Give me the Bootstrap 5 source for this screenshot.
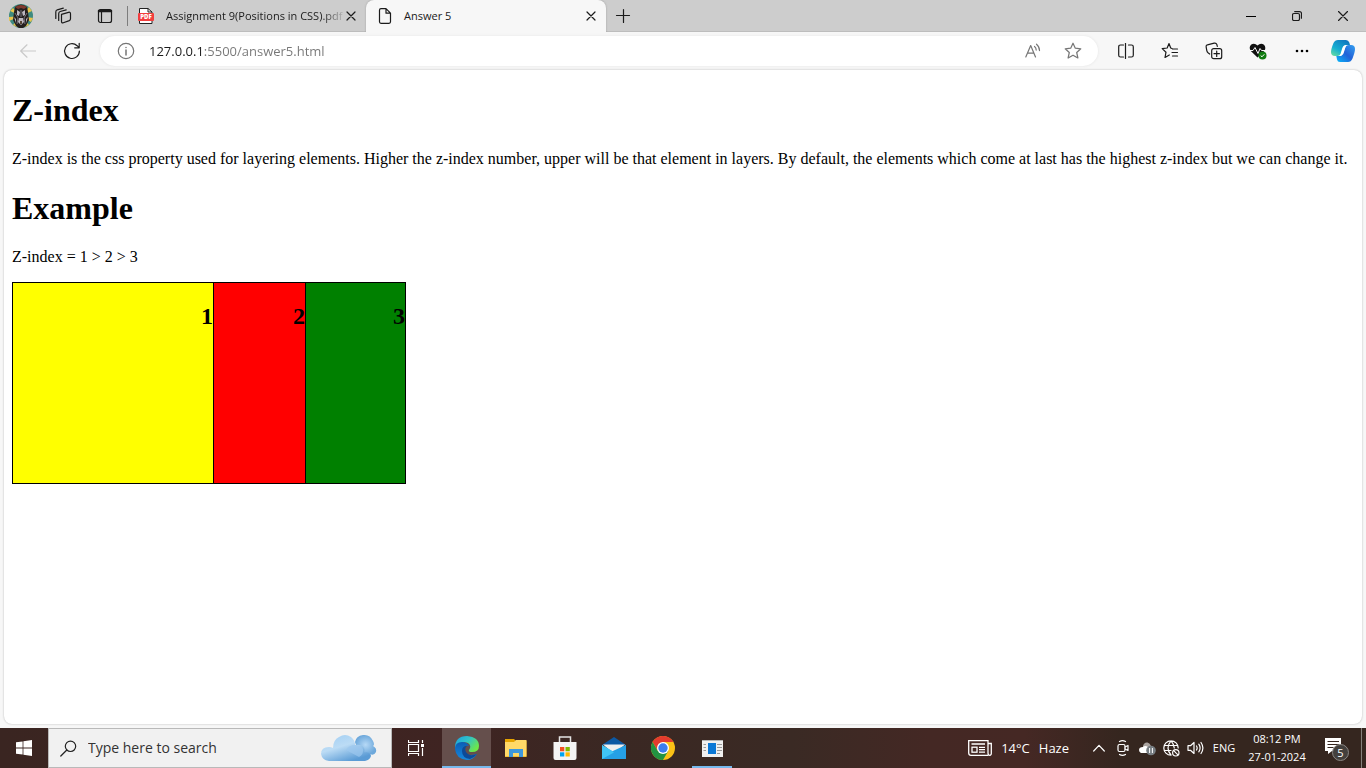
<!DOCTYPE html>
<html lang="en">
<head>
<meta charset="utf-8">
<meta name="viewport" content="width=device-width, initial-scale=1">
<title>Answer 5</title>
<link href="https://cdn.jsdelivr.net/npm/bootstrap@5.3.0/dist/css/bootstrap.min.css" rel="stylesheet">
<style>
  body { font-family: "Open Sans", "Noto Sans", sans-serif; font-size: 11px; line-height: 16px; background: #f7f7f7; color: #1b1b1b; }
  button { border: 0; padding: 0; background: transparent; color: inherit; display: flex; align-items: center; justify-content: center; flex-shrink: 0; }
  svg { display: block; flex-shrink: 0; }
  .ln { fill: none; stroke: currentColor; stroke-width: 1.2; stroke-linecap: round; stroke-linejoin: round; }

  /* tab strip */
  .tab-strip { background: #cdcdcd; height: 32px; box-shadow: inset 0 -1px 0 #bdbdbd; }
  .strip-btn { width: 42px; height: 32px; }
  .win-btn { width: 46px; height: 32px; }
  .split-line { width: 1px; height: 20px; background: #7d7d7d; margin-left: 1px; }
  .page-tab { width: 238px; height: 32px; padding: 0 8px 0 10px; color: #1b1b1b; }
  .page-tab.current { width: 240px; background: #f7f7f7; border-radius: 8px 8px 0 0; padding-left: 12px; box-shadow: 0 0 2px #999; clip-path: inset(0 -3px 0 -3px); }
  .page-tab a { color: inherit; text-decoration: none; overflow: hidden; white-space: nowrap; }
  .fade-end { -webkit-mask-image: linear-gradient(to right, #000 160px, transparent 184px); mask-image: linear-gradient(to right, #000 160px, transparent 184px); }
  .tab-x { width: 14px; height: 16px; }

  /* toolbar */
  .tool-row { height: 38px; }
  .nav-btn { width: 44px; height: 38px; }
  .nav-btn.off { color: #c9c9c9; }
  .address { height: 30px; border-radius: 15px; background: #fff; margin: 0 6px 0 4px; padding: 0 5px 0 17px; box-shadow: 0 0 3px #e4e4e4; color: #767676; }
  .address input { border: 0; outline: 0; font-size: 13px; line-height: 20px; height: 24px; padding: 0; margin-left: 14px; color: #767676; background: linear-gradient(to right, #1b1b1b 53px, #767676 53px); -webkit-background-clip: text; background-clip: text; -webkit-text-fill-color: transparent; }
  .addr-btn { width: 40px; height: 30px; }

  /* document */
  .doc { font-family: "Liberation Serif", serif; font-size: 16px; line-height: 18px; color: #000; background: #fff; margin: 0 4px 4px; padding: 22px 8px; border-radius: 8px; box-shadow: 0 0 2px #b0b0b0; }
  .doc h1 { font-size: 32px; line-height: 37px; font-weight: 700; margin: 0 0 21px; }
  .doc p { margin: 0 0 22px; }
  .doc p.formula { margin-bottom: 16px; }
  .layer { width: 202px; height: 202px; border: 1px solid #000; position: relative; text-align: right; padding-top: 20px; flex-shrink: 0; }
  .layer h2 { font-size: 24px; line-height: 27px; font-weight: 700; margin: 0; }
  .layer-1 { background: yellow; z-index: 3; }
  .layer-2 { background: red; z-index: 2; margin-left: -110px; }
  .layer-3 { background: green; z-index: 1; margin-left: -102px; }

  /* taskbar */
  .task-row { height: 40px; color: #fff; background: linear-gradient(to right, #3a2521 0, #3f2422 33%, #3a2823 45%, #3a2a24 58%, #442824 68%, #452824 75%, #35261f 82%, #35261f 100%); }
  .start { width: 48px; height: 40px; }
  .search-box { width: 344px; height: 40px; background: #f1f1f1; border: 1px solid #b9b9b9; color: #222; padding: 0 13px 0 11px; }
  .search-box input { border: 0; outline: 0; background: transparent; font-size: 14px; line-height: 20px; padding: 0; min-width: 0; margin-left: 11px; color: #333; }
  .search-box input::placeholder { color: #333; opacity: 1; }
  .task-btn { width: 49px; height: 40px; }
  .task-btn.view { width: 50px; padding-right: 2px; }
  .task-btn.active { background: #654f4c; box-shadow: inset 0 -2px 0 #76b9ed; }
  .task-btn.running { width: 40px; margin: 0 5px; box-shadow: inset 0 -2px 0 #76b9ed; }
  .weather { font-size: 13px; gap: 9px; height: 40px; margin-right: 18px; }
  .tray-btn { width: 24px; height: 40px; }
  .lang { width: 34px; height: 40px; font-size: 11px; }
  .clock { width: 72px; font-size: 11px; line-height: 18px; text-align: center; }
  .notice { width: 48px; height: 40px; }
  .peek { width: 5px; height: 40px; border-left: 1px solid #85807b; }
</style>
</head>
<body class="d-flex flex-column min-vh-100">

<header>
  <div class="tab-strip d-flex align-items-center">
    <button class="strip-btn" aria-label="Profile">
      <svg width="24" height="24" viewBox="0 0 24 24">
        <circle cx="12" cy="12" r="12" fill="#3f8b80"/>
        <path d="M12 12L1 7l3-3zM12 12L0 13v4zM12 12L20 3l3 4zM12 12l12 2-2 4zM12 12L4 21l4 2zM12 12l8 9-4 2z" fill="#e8c44d"/>
        <path d="M6 3q6-5 12 0l1 5 1 8-3 6-3 2h-4l-3-2-3-6 1-8z" fill="#25201f"/>
        <path d="M6 3q6-4 12 0l-3 2-3-1-3 1z" fill="#803a2e"/>
        <path d="M8 6l3 2-1 4-2-1zM16 6l-3 2 1 4 2-1zM10 14h4l1 4-3 3-3-3zM5 13l2 2v4zM19 13l-2 2v4z" fill="#bcb7c0"/>
        <path d="M6 9l3 5-1 6M18 9l-3 5 1 6M12 6v7" fill="none" stroke="#77727c"/>
        <path d="M11 17h2v3h-2z" fill="#543"/>
      </svg>
    </button>
    <button class="strip-btn" aria-label="Workspaces">
      <svg class="ln" width="18" height="18" viewBox="0 0 18 18"><path d="M7.500 7.300l7-2q2-.5 2 1.500v5q0 1.300-1.200 1.800l-6 2.200q-1.800.6-1.800-1.300zM4.700 13.500V6.700q0-1.700 1.500-2.200l6-1.700M1.800 11.500V5q0-1.700 1.500-2.200l6-1.700"/></svg>
    </button>
    <button class="strip-btn" aria-label="Tab actions">
      <svg class="ln" width="16" height="16" viewBox="0 0 16 16"><rect x="1.500" y="1.500" width="13" height="13" rx="2"/><path d="M2 3h12" stroke-width="2.500"/><path d="M4.500 4v10"/></svg>
    </button>
    <div class="split-line"></div>
    <div class="page-tab d-flex align-items-center">
      <svg width="16" height="16" viewBox="0 0 16 16"><path d="M1.500.5H10L14 4v11.500H1.500z" fill="#fff" stroke="#222"/><path d="M10 .5V4h4" fill="none" stroke="#222"/><rect y="5" width="16" height="8" rx="1" fill="#f23e3e"/><text x="8" y="11" font-size="6" font-weight="800" fill="#fff" text-anchor="middle">PDF</text></svg>
      <a class="fade-end flex-grow-1 ms-2 ps-1" href="#">Assignment 9(Positions in CSS).pdf</a>
      <button class="tab-x" aria-label="Close tab"><svg class="ln" width="10" height="10" viewBox="0 0 10 10"><path d="M1 1l8 8M9 1L1 9"/></svg></button>
    </div>
    <div class="page-tab current d-flex align-items-center">
      <svg class="ln" width="14" height="16" viewBox="0 0 14 16"><path d="M8 .7H3Q1.500.7 1.500 2.200v11.600q0 1.500 1.500 1.500h8q1.500 0 1.500-1.500V5.200L8 .7v4.500h4.500"/></svg>
      <a class="flex-grow-1 ms-2 ps-1" href="#">Answer 5</a>
      <button class="tab-x" aria-label="Close tab"><svg class="ln" width="10" height="10" viewBox="0 0 10 10"><path d="M1 1l8 8M9 1L1 9"/></svg></button>
    </div>
    <button class="px-2 h-100" aria-label="New tab"><svg class="ln" width="18" height="16" viewBox="0 0 18 16"><path d="M9.500 1.500v13M2.500 7.500h13"/></svg></button>
    <div class="d-flex ms-auto">
      <button class="win-btn" aria-label="Minimise"><svg width="10" height="10"><path d="M0 5.500h10" stroke="#000"/></svg></button>
      <button class="win-btn" aria-label="Restore"><svg class="ln" width="10" height="10" viewBox="0 0 10 10"><rect x=".5" y="2.500" width="7" height="7" rx="1.500"/><path d="M2.700.6h4.800q2 0 2 2v4.600"/></svg></button>
      <button class="win-btn" aria-label="Close"><svg class="ln" width="10" height="10" viewBox="0 0 10 10"><path d="M.5.5l9 9M9.500.5l-9 9"/></svg></button>
    </div>
  </div>

  <div class="tool-row d-flex align-items-center">
    <button class="nav-btn off ms-2 pe-1" aria-label="Back"><svg class="ln" width="16" height="14" viewBox="0 0 16 14"><path d="M15.500 7H.7M7 .8L.7 7 7 13.200"/></svg></button>
    <button class="nav-btn pe-1" aria-label="Refresh"><svg class="ln" width="18" height="18" viewBox="0 0 18 18"><path d="M16.400 9a7.400 7.400 0 1 1-2.300-5.300l2 2M16.200 1.300v4.500h-4.500"/></svg></button>
    <div class="address d-flex align-items-center flex-grow-1">
      <svg class="ln" width="18" height="18" viewBox="0 0 18 18"><circle cx="9" cy="9" r="7.700"/><path d="M9 8v5M9 5.400v.2" stroke-width="1.500"/></svg>
      <input class="flex-grow-1" type="text" aria-label="Address" value="127.0.0.1:5500/answer5.html">
      <button class="addr-btn" aria-label="Read aloud"><svg class="ln" width="16" height="16" viewBox="0 0 16 16"><path d="M.8 14L5.700 2.500 10.500 14M2.400 10.200h6.500M9.500 3.400q1.700 1.300 1.700 3.700M11.500 1.200q3 2.400 3 6.400"/></svg></button>
      <button class="addr-btn" aria-label="Favourite"><svg class="ln" width="18" height="18" viewBox="0 0 18 18"><path d="M9 1.200l2.300 5 5.500.6-4.100 3.700 1.200 5.500L9 13.200 4.100 16l1.200-5.500-4.100-3.700 5.500-.6z"/></svg></button>
    </div>
    <button class="nav-btn" aria-label="Split screen"><svg class="ln" width="16" height="16" viewBox="0 0 16 16"><path d="M5.500 2H2.500Q.7 2 .7 3.800v8.400Q.7 14 2.500 14h3M10.500 2h3q1.800 0 1.800 1.800v8.400q0 1.800-1.800 1.800h-3"/><path d="M7.500.5v15"/></svg></button>
    <button class="nav-btn" aria-label="Favourites"><svg class="ln" width="18" height="18" viewBox="0 0 18 18"><path d="M11 6.500L9.700 6 8 1.500 6.200 6l-5 .6L5 10.200l-1 5.300 4.300-2.500M11.500 7h5M11 10.500h5.500M11.500 14h5"/></svg></button>
    <button class="nav-btn" aria-label="Collections"><svg class="ln" width="18" height="18" viewBox="0 0 18 18"><rect x="6.700" y="6.700" width="10" height="10" rx="2"/><path d="M11.700 9v5.400M9 11.700h5.400M4.700 12L3.300 11Q2 10 1.800 8.700L1.100 4.600Q1 3.200 2.400 2.900l6.800-1.800q2-.4 2.600 1.300l.5 1.900"/></svg></button>
    <button class="nav-btn" aria-label="Browser essentials"><svg width="18" height="18" viewBox="0 0 18 18"><path d="M8.500 15.500L1.800 9Q-.5 5.500 2 2.800q3.300-2.500 6.500.7 3.200-3.200 6.500-.7 2.500 2.700.3 6.200z" fill="#111"/><path d="M0 8.500h4l2-3 3 6 2-5 1.500 2H17" fill="none" stroke="#f7f7f7"/><circle cx="13.500" cy="13.500" r="4" fill="#107c10"/><path d="M11.700 13.600l1.300 1.200 2.300-2.500" fill="none" stroke="#fff"/></svg></button>
    <button class="nav-btn" aria-label="Settings and more"><svg width="14" height="4"><circle cx="2" cy="2" r="1.300"/><circle cx="7" cy="2" r="1.300"/><circle cx="12" cy="2" r="1.300"/></svg></button>
    <button class="strip-btn pe-1" aria-label="Copilot">
      <svg width="24" height="24" viewBox="0 0 24 24">
        <defs><linearGradient id="cpA" x1="0" y1="1" x2=".7" y2="0"><stop offset="0" stop-color="#6ee29a"/><stop offset=".45" stop-color="#14aed2"/><stop offset="1" stop-color="#117ac0"/></linearGradient><linearGradient id="cpB" x1="1" y1="0" x2="0" y2="1"><stop offset="0" stop-color="#35a0f0"/><stop offset=".5" stop-color="#2262d8"/><stop offset="1" stop-color="#08b8fa"/></linearGradient></defs>
        <path d="M7 1h8q2.500 0 3.300 2.500L19 6h-3q-3 0-4 3l-2 6q-1 2-3 2H4q-4 0-4-4 0-3 2.500-9Q4 1 7 1z" fill="url(#cpA)"/>
        <path d="M17 23H9q-2.500 0-3-2.500L5.300 17H8q3 0 4-3l2-5q1-3 4-3h2q4 0 4 4 0 3-2.500 9.500Q20 23 17 23z" fill="url(#cpB)"/>
        <path d="M16 6h-1q-3 0-4 4l-1.500 5q-.7 2-2.500 2h2q3-.3 4-4l1.500-5q.3-1.500 1.500-2z" fill="#fff"/>
      </svg>
    </button>
  </div>
</header>

<main class="doc flex-grow-1">
  <h1>Z-index</h1>
  <p>Z-index is the css property used for layering elements. Higher the z-index number, upper will be that element in layers. By default, the elements which come at last has the highest z-index but we can change it.</p>
  <h1>Example</h1>
  <p class="formula">Z-index = 1 &gt; 2 &gt; 3</p>
  <div class="d-flex">
    <div class="layer layer-1"><h2>1</h2></div>
    <div class="layer layer-2"><h2>2</h2></div>
    <div class="layer layer-3"><h2>3</h2></div>
  </div>
</main>

<footer class="task-row d-flex align-items-center">
  <button class="start" aria-label="Start"><svg width="16" height="16" viewBox="0 0 16 16" fill="#fff"><path d="M0 2.300L6.600 1.400v6.200H0zM7.400 1.300L16 0v7.600H7.400zM0 8.400h6.600v6.200L0 13.700zM7.400 8.400H16V16l-8.600-1.300z"/></svg></button>
  <div class="search-box d-flex align-items-center">
    <svg class="ln" width="17" height="17" viewBox="0 0 17 17"><circle cx="10.500" cy="6.300" r="5.200"/><path d="M6.800 10L.8 16"/></svg>
    <input class="flex-grow-1" type="text" placeholder="Type here to search" aria-label="Type here to search">
    <svg width="58" height="28" viewBox="0 0 58 28">
      <defs><linearGradient id="cl" x1="0" y1="0" x2=".6" y2="1"><stop offset="0" stop-color="#9fcdf3"/><stop offset=".5" stop-color="#bcdcf5"/><stop offset="1" stop-color="#5a9bd5"/></linearGradient><radialGradient id="cm"><stop offset="0" stop-color="#b6d9f6"/><stop offset="1" stop-color="#6da8db"/></radialGradient></defs>
      <path d="M35 8q1-6 8-7 7-1 10 6 2 4 0 5 4 2 3 6-2 4-6 2L38 17z" fill="url(#cm)"/>
      <path d="M1 20q0-7 8-7 2 0 4 1 0-8 6-11 6-4 12 0 4 3 4 8 7-1 9 3 1 2 0 4 7 0 7 4-1 4-6 5H9Q2 26 1 20z" fill="url(#cl)"/>
      <path d="M26 16q3-5 9-5 6 0 8 4 1 5-4 8z" fill="#9cc8ee" opacity=".7"/>
    </svg>
  </div>
  <button class="task-btn view" aria-label="Task view"><svg width="17" height="16" viewBox="0 0 17 16" fill="none" stroke="#fff"><path d="M.5 0v2.500h10V0M.5 16v-2.500h10V16M.5 4.500h10v7H.5zM14.500 0v3M14.500 8v8" stroke-width="1.200"/><rect x="13.500" y="4.500" width="2" height="2" fill="#fff"/></svg></button>
  <button class="task-btn active" aria-label="Microsoft Edge">
    <svg width="24" height="24" viewBox="0 0 24 24">
      <defs><linearGradient id="eg" x1="0" y1="0" x2="1" y2=".6"><stop offset="0" stop-color="#1a9fe0"/><stop offset=".5" stop-color="#30c3c8"/><stop offset="1" stop-color="#6ee846"/></linearGradient><linearGradient id="eh" x1="0" y1="0" x2="0" y2="1"><stop offset="0" stop-color="#0b5cb5"/><stop offset="1" stop-color="#1689dd"/></linearGradient></defs>
      <path d="M0 12Q0 0 12 0q12 1 12 10 0 6-7 6-4 0-3-2 3-4-1-7-6-3-13 5z" fill="url(#eg)"/>
      <path d="M0 13Q0 6 7 6q5 0 7 4-7-1-5 5 2 6 13 3-4 6-10 6Q1 23 0 13z" fill="url(#eh)"/>
      <path d="M7 15q0-5 5-5-3 2-1 6 3 5 11 2-3 4-7 5-8-1-8-8z" fill="#0d4a97"/>
    </svg>
  </button>
  <button class="task-btn" aria-label="File Explorer"><svg width="22" height="18" viewBox="0 0 22 18"><path d="M0 0h9l2 2h10.500v16H0z" fill="#e6a400"/><path d="M0 3h9l2-2h10.500v16.500H0z" fill="#ffd968"/><path d="M4 10h14v8h-4v-4H8v4H4z" fill="#3d98dc"/></svg></button>
  <button class="task-btn" aria-label="Microsoft Store"><svg width="24" height="24" viewBox="0 0 24 24"><path d="M6.500 8V1h11v7" fill="none" stroke="#e4e4e4" stroke-width="1.500"/><path d="M.5 6h23v16q0 2-2 2h-19q-2 0-2-2z" fill="#f4f4f4"/><path d="M7 11h4.300v4.300H7z" fill="#f25022"/><path d="M12.500 11h4.300v4.300h-4.300z" fill="#7fba00"/><path d="M7 16.300h4.300v4.200H7z" fill="#00a4ef"/><path d="M12.500 16.300h4.300v4.200h-4.300z" fill="#ffb900"/></svg></button>
  <button class="task-btn" aria-label="Mail"><svg width="24" height="24" viewBox="0 0 24 24"><path d="M0 9L12 1l12 8z" fill="#0c59a4"/><path d="M1 8.500h22L12 18z" fill="#f0f0f0"/><path d="M0 9l12 7 12-7v14H0z" fill="#35b8f1"/><path d="M0 23l12-8.500L24 9v14z" fill="#25a0e6"/><path d="M0 9l12 7.500L0 23z" fill="#40c4f5"/></svg></button>
  <button class="task-btn" aria-label="Chrome"><svg width="24" height="24" viewBox="0 0 24 24"><circle cx="12" cy="12" r="12" fill="#fbc116"/><path d="M1.600 6A12 12 0 0 1 22.400 6H12L7 15z" fill="#e33b2e"/><path d="M1.600 6A12 12 0 0 0 12 24l5.200-9-10.400 0z" fill="#229342"/><circle cx="12" cy="12" r="6" fill="#fff"/><circle cx="12" cy="12" r="4.700" fill="#3b7ded"/></svg></button>
  <button class="task-btn running" aria-label="Window application"><svg width="21" height="17" viewBox="0 0 21 17"><path d="M0 0h21v17H0z" fill="#f0f0f0"/><path d="M0 .5h21" stroke="#b5b5b5"/><path d="M6 3h8v11H6z" fill="#0b78d6"/><path d="M1.500 4.500H4M1.500 7.500H4M1.500 10.500H4M15 4.500h5M15 7.500h5M15 10.500h5M15 13.500h3" stroke="#999"/></svg></button>

  <div class="d-flex align-items-center ms-auto">
    <button class="weather"><svg width="24" height="16" viewBox="0 0 24 16" fill="none" stroke="#fff" stroke-width="1.300"><path d="M20 15.300H3Q.7 15.300.7 13V.7H20V13q0 2.300 1.700 2.300T23.300 13V3.500H20M3.500 4h13.500M11 7.300h6M11 9.700h6M11 12.200h6"/><rect x="4" y="7.200" width="5" height="5"/></svg><span>14°C</span><span>Haze</span></button>
    <button class="tray-btn" aria-label="Show hidden icons"><svg class="ln" width="12" height="8" viewBox="0 0 12 8"><path d="M.7 7L6 1.300 11.300 7"/></svg></button>
    <button class="tray-btn" aria-label="Meet now"><svg class="ln" width="12" height="16" viewBox="0 0 12 16"><rect x="1" y="4.500" width="7" height="7" rx="1.500"/><path d="M8 7l3-1.500v5L8 9M2.500 1.500Q5.500-.2 8.500 1.500M2.500 14.500q3 1.700 6 0"/></svg></button>
    <button class="tray-btn" aria-label="OneDrive"><svg width="17" height="16" viewBox="0 0 17 16"><path d="M4 6Q5 2 8.500 2.500 11 3 12 6l2 3H4z" fill="#aaa39f"/><path d="M0 10q0-3 4-3 2-2 5 0l1 6H2q-2-1-2-3z" fill="#fff"/><circle cx="12" cy="10.500" r="4.800" fill="#777e83"/><path d="M10.600 8v5M13.400 8v5" stroke="#fff"/></svg></button>
    <button class="tray-btn" aria-label="Network"><svg class="ln" width="17" height="17" viewBox="0 0 17 17"><path d="M8 15.200A7.200 7.200 0 1 1 15.200 8M8 15q-6-7 0-14.200Q11 4 11.300 8M1.500 5.500h13M1.500 10.500H8"/><circle cx="12.800" cy="12.800" r="3.200"/><path d="M10.700 10.700l4.200 4.200"/></svg></button>
    <button class="tray-btn" aria-label="Volume"><svg class="ln" width="17" height="14" viewBox="0 0 17 14"><path d="M1 4.700h2.500L7 1.500v11L3.500 9.300H1zM9.500 5q1.300 2 0 4M11.800 3.200q2.600 3.800 0 7.600M14 1.500q3.800 5.500 0 11"/></svg></button>
    <button class="lang">ENG</button>
    <div class="clock"><div>08:12 PM</div><div>27-01-2024</div></div>
    <button class="notice" aria-label="Notifications"><svg width="28" height="26" viewBox="0 0 28 26"><path d="M2 3h16v13H9l-4 3v-3H2z" fill="#fff"/><path d="M4.500 6.500H16M4.500 9.500H16M4.500 12.500h6" stroke="#35261f"/><circle cx="17.500" cy="17.500" r="8" fill="#44403d" stroke="#8b8784"/><text x="17.500" y="21.500" font-size="11" fill="#fff" text-anchor="middle">5</text></svg></button>
    <div class="peek"></div>
  </div>
</footer>

<script src="https://cdn.jsdelivr.net/npm/bootstrap@5.3.0/dist/js/bootstrap.bundle.min.js"></script>
</body>
</html>
